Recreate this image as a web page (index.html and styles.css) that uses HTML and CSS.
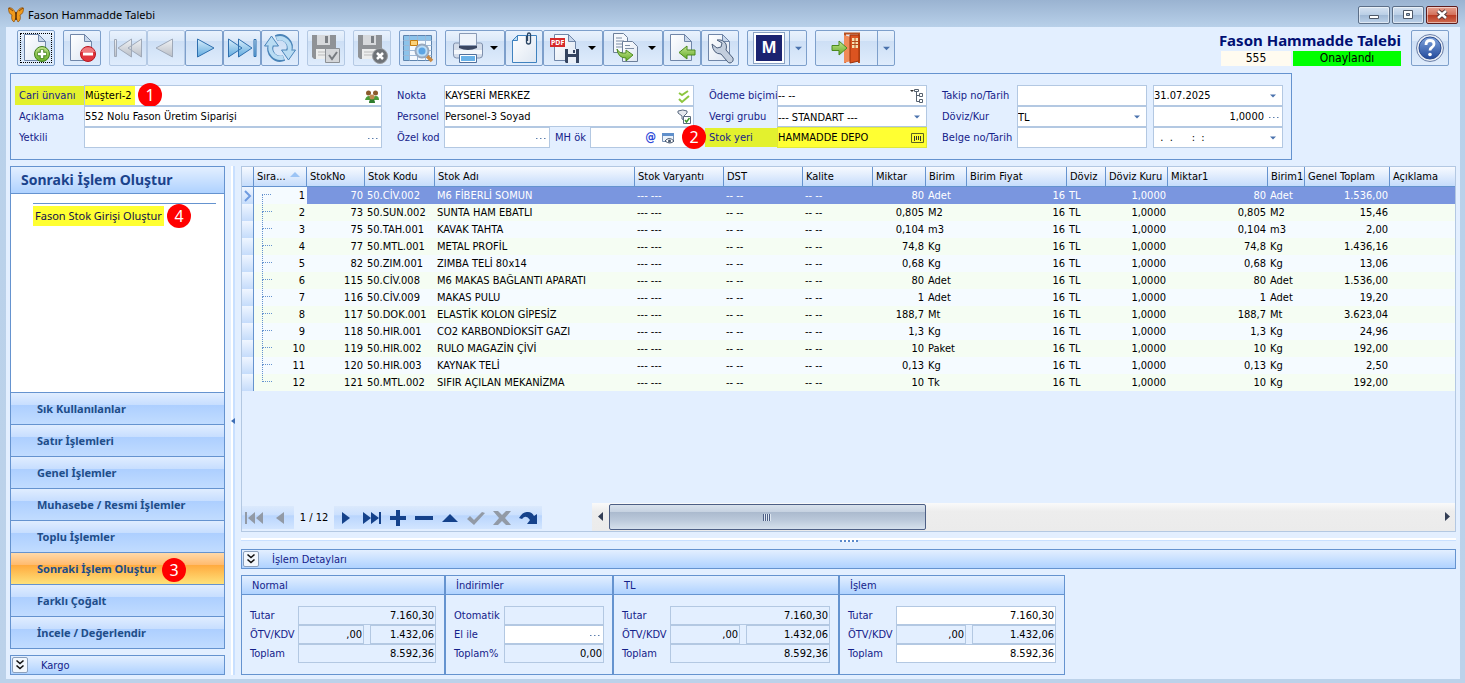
FILE: index.html
```html
<!DOCTYPE html>
<html lang="tr">
<head>
  <meta charset="UTF-8" />
  <meta name="viewport" content="width=device-width, initial-scale=1.0"/>
  <title>Fason Hammadde Talebi</title>
  <link rel="stylesheet" href="styles.css">
</head>
<body>
  <svg class="defs" width="0" height="0">
    <defs>
      <linearGradient id="gPage" x1="0" y1="0" x2="1" y2="1"><stop offset="0" stop-color="#fff"/><stop offset="1" stop-color="#dde6f2"/></linearGradient>
      <linearGradient id="gBlue" x1="0" y1="0" x2="0" y2="1"><stop offset="0" stop-color="#d8eefb"/><stop offset="1" stop-color="#5fa9de"/></linearGradient>
      <linearGradient id="gGrey" x1="0" y1="0" x2="0" y2="1"><stop offset="0" stop-color="#f0f2f5"/><stop offset="1" stop-color="#b9bec6"/></linearGradient>
      <linearGradient id="gHelp" x1="0" y1="0" x2="0" y2="1"><stop offset="0" stop-color="#7fa3dc"/><stop offset="1" stop-color="#234a9c"/></linearGradient>
      <linearGradient id="gGreen" x1="0" y1="0" x2="0" y2="1"><stop offset="0" stop-color="#c4e58e"/><stop offset="1" stop-color="#63ab27"/></linearGradient>
      <symbol id="page" viewBox="0 0 32 32">
        <path d="M4.500 2.500h14l7 7v19h-21z" fill="url(#gPage)" stroke="#7086a8"/>
        <path d="M18.500 2.500v7h7z" fill="#c9d8ec" stroke="#7086a8"/>
      </symbol>
      <symbol id="floppy" viewBox="0 0 32 32">
        <path d="M2 3h24v24H4l-2-2z" fill="#8f9296"/>
        <path d="M7 3h13v10H7z" fill="#d7d9dc"/><path d="M15 4h3v7h-3z" fill="#7b7f84"/>
        <path d="M6 17h15v10H6z" fill="#eceded"/><path d="M8 20h11M8 23h11" stroke="#bbb"/>
      </symbol>
      <symbol id="arrowDown" viewBox="0 0 8 8"><path d="M0 2h8L4 6z"/></symbol>
      <symbol id="dots" viewBox="0 0 10 10"><path d="M0 5.500h1.500M4 5.500h1.500M8 5.500h1.500" stroke="#5d7fae"/></symbol>
      <symbol id="chev" viewBox="0 0 12 12"><path d="M2.500 1.500L6 4.500l3.500-3M2.500 6.500L6 9.500l3.500-3" fill="none" stroke="#111" stroke-width="1.600"/></symbol>
    </defs>
  </svg>

  <div class="window">
    <div class="titlebar">
      <svg class="logo" viewBox="0 0 16 16" width="16" height="16">
        <path d="M8 7C6 2 3 0 .5 1c0 4 1 6 3.500 7-1 3 0 6 2 7l2-4 2 4c2-1 3-4 2-7 2.500-1 3.500-3 3.500-7C13 0 10 2 8 7z" fill="#f09a1c" stroke="#8a4a08" stroke-width=".7"/>
        <path d="M8 5v8" stroke="#4a2504" stroke-width="1.400"/><path d="M1 1l4 3M15 1l-4 3" stroke="#6b3505" stroke-width=".8"/>
      </svg>
      <span class="caption">Fason Hammadde Talebi</span>
      <button class="win" aria-label="Simge durumuna küçült"><svg width="14" height="12" viewBox="0 0 14 12"><path d="M2.500 6.500h9v3h-9z" fill="#fff" stroke="#4d5868"/></svg></button>
      <button class="win" aria-label="Ekranı kapla"><svg width="14" height="12" viewBox="0 0 14 12"><path d="M2.500 1.500h9v8h-9z" fill="#fff" stroke="#4d5868"/><path d="M5.500 4.500h3v2h-3z" fill="#9db5d2" stroke="#4d5868"/></svg></button>
      <button class="win close" aria-label="Kapat"><svg width="14" height="12" viewBox="0 0 14 12"><path d="M3 2l8 7M11 2L3 9" stroke="#54383a" stroke-width="4.500"/><path d="M3 2l8 7M11 2L3 9" stroke="#fff" stroke-width="2.500"/></svg></button>
    </div>

    <div class="content">
      <div class="toolbar">
        <div class="group">
          <button class="tool focused" aria-label="Yeni"><svg viewBox="0 0 32 32"><use href="#page"/><circle cx="22" cy="22" r="7.500" fill="url(#gGreen)" stroke="#3f7d1b"/><path d="M22 17.500v9M17.500 22h9" stroke="#3f7d1b" stroke-width="4.500"/><path d="M22 18v8M18 22h8" stroke="#fff" stroke-width="2.500"/></svg></button>
        </div>
        <div class="group">
          <button class="tool" aria-label="Sil"><svg viewBox="0 0 32 32"><use href="#page"/><circle cx="22" cy="22" r="7.500" fill="#e2343c" stroke="#b5161f"/><path d="M15 20a7.500 7.500 0 0 1 14 0z" fill="#f07a7e"/><path d="M17 22h10" stroke="#fff" stroke-width="3"/></svg></button>
        </div>
        <div class="group">
          <button class="tool off" aria-label="İlk"><svg viewBox="0 0 32 32"><path d="M2.500 7.500h2v17h-2zM19.500 7v18L6 16zM29.500 7v18L16 16z" fill="url(#gGrey)" stroke="#9fa9b8"/></svg></button>
          <button class="tool off" aria-label="Önceki"><svg viewBox="0 0 32 32"><path d="M22.500 7v18L6 16z" fill="url(#gGrey)" stroke="#9fa9b8"/></svg></button>
          <button class="tool" aria-label="Sonraki"><svg viewBox="0 0 32 32"><path d="M9.500 7v18L26 16z" fill="url(#gBlue)" stroke="#2f6fae"/></svg></button>
          <button class="tool" aria-label="Son"><svg viewBox="0 0 32 32"><path d="M2.500 7v18L16 16zM12.500 7v18L26 16zM28 7.500h2v17h-2z" fill="url(#gBlue)" stroke="#2f6fae"/></svg></button>
          <button class="tool" aria-label="Yenile"><svg viewBox="0 0 32 32">
            <path d="M20 26A10 10 0 0 1 7 13M12 6A10 10 0 0 1 25 19" fill="none" stroke="#4a84b8" stroke-width="6"/>
            <path d="M.5 14h14L7.500 4zM31.500 18h-14l7 10z" fill="#b9dcf3" stroke="#4a84b8"/>
            <path d="M19.500 25.500A10 10 0 0 1 7 12.500M12.500 6.500A10 10 0 0 1 25 19.500" fill="none" stroke="#b9dcf3" stroke-width="4"/>
          </svg></button>
        </div>
        <div class="group">
          <button class="tool off" aria-label="Kaydet"><svg viewBox="0 0 32 32"><use href="#floppy"/><path d="M15.500 16.500h14v14h-14z" fill="#d4d6d9" stroke="#8c9095"/><path d="M19 23l3 4 5-7" fill="none" stroke="#777b80" stroke-width="2"/></svg></button>
        </div>
        <div class="group">
          <button class="tool off" aria-label="Vazgeç"><svg viewBox="0 0 32 32"><use href="#floppy"/><circle cx="24" cy="24" r="7.500" fill="#6f7378" stroke="#9a9da1"/><path d="M21 21l6 6M27 21l-6 6" stroke="#fff" stroke-width="2.500"/></svg></button>
        </div>
        <div class="group">
          <button class="tool" aria-label="Ara"><svg viewBox="0 0 32 32"><path d="M1.500 3.500h28v25h-28z" fill="#f4f9fe" stroke="#5e84ae"/><path d="M2 4h5v24H2zM2 4h27v4H2z" fill="#8cc3ea"/><path d="M7.500 3.500v25M15.500 3.500v25M23.500 3.500v25M1.500 8.500h28M1.500 13.500h28M1.500 18.500h28M1.500 23.500h28" stroke="#9db8d6"/><path d="M8.500 8.500h7v5h-7z" fill="#fbd27a" stroke="#c77d10"/><path d="M25 24l5 5" stroke="#c98a44" stroke-width="3.500"/><circle cx="20" cy="19" r="6.500" fill="#b9dcf7" stroke="#9aa9bd" stroke-width="2"/><circle cx="20" cy="19" r="3.500" fill="#5da5e4"/></svg></button>
        </div>
        <div class="group">
          <button class="tool wide" aria-label="Yazdır"><svg viewBox="0 0 32 32"><path d="M1.500 13q0-2 2-2h25q2 0 2 2v10q0 3-3 3h-23q-3 0-3-3z" fill="#d3dcea" stroke="#7f90ad"/><path d="M7 12h18v4q-9 4-18 0z" fill="#3a4661"/><path d="M7.500 1.500h17v12h-17z" fill="#eef3fa" stroke="#8a9ab5"/><path d="M2 18h28v4H2z" fill="#f4f7fb"/><path d="M8.500 23.500h15v6h-15z" fill="#6ab2e8" stroke="#fff"/><path d="M7.500 22.500h17v8h-17z" fill="none" stroke="#51709c"/></svg><svg class="arr"><use href="#arrowDown"/></svg></button>
          <button class="tool" aria-label="Ekler"><svg viewBox="0 0 32 32"><path d="M9.500 3.500h19v27h-24v-22z" fill="url(#gPage)" stroke="#3f82bf"/><path d="M9.500 3.500v5h-5z" fill="#bcdcf4" stroke="#3f82bf"/><path d="M18.500 4v6a2 2 0 0 0 4 0V2.500a1.500 1.500 0 0 0-3 0V9" fill="none" stroke="#2b4563" stroke-width="1.300"/></svg></button>
          <button class="tool wide" aria-label="PDF kaydet"><svg viewBox="0 0 32 32"><use href="#page"/><path d="M0 6h15v9H0z" fill="#d62a2a"/><text x="1" y="13" class="pdf">PDF</text><path d="M15 17h14v14H16l-1-1z" fill="#34435f"/><path d="M18 17h8v5h-8zM18 25h8v6h-8z" fill="#e9eff8"/><path d="M23 18h2v3h-2z" fill="#34435f"/></svg><svg class="arr"><use href="#arrowDown"/></svg></button>
          <button class="tool wide" aria-label="Kopyala"><svg viewBox="0 0 32 32"><path d="M3.500 1.500h10l4 4v15h-14z" fill="#f5f8fc" stroke="#6d7f9a"/><path d="M6 6h6M6 9h8M6 12h8M6 15h8" stroke="#7d8da5"/><path d="M12.500 9.500h10l5 5v15h-15z" fill="url(#gPage)" stroke="#6d7f9a"/><path d="M15 13.500h5M15 16.500h9" stroke="#7d8da5"/><path d="M7 17q2 5 9 4v-3l7 5-7 6v-3q-8 0-9-9z" fill="url(#gGreen)" stroke="#4b8a1e"/></svg><svg class="arr"><use href="#arrowDown"/></svg></button>
          <button class="tool" aria-label="Aktar"><svg viewBox="0 0 32 32"><use href="#page"/><path d="M13 20.500l8-6.500v4h8v5h-8v4z" fill="url(#gGreen)" stroke="#4b8a1e"/></svg></button>
          <button class="tool" aria-label="Araçlar"><svg viewBox="0 0 32 32"><use href="#page"/><path d="M8 12l5 4 4-1 1-4-5-3q6-1 9 4 1 3 0 6l7 8q1 4-3 5-2 0-3-2l-6-7q-8 0-9-10z" fill="#c3cedd" stroke="#4c5f7c"/></svg></button>
        </div>
        <div class="group">
          <button class="tool wide split" aria-label="Modül"><span class="mlogo">M</span><svg class="arr"><use href="#arrowDown"/></svg></button>
        </div>
        <div class="group">
          <button class="tool exit split" aria-label="Çıkış"><svg viewBox="0 0 32 32"><path d="M14 31V1.500h14V31" fill="none" stroke="#b9501f" stroke-width="2"/><path d="M13 3l7 2v24l-7 2z" fill="#f08a58"/><path d="M19 3h9v26l-9 2z" fill="#dc5420" stroke="#9c3009"/><path d="M21 6h6v10h-6z" fill="#f7dfae"/><path d="M24 6v10M21 9.500h6M21 12.500h6" stroke="#b54a1c"/><path d="M1 13.500h7V9l8 7-8 7v-4.500H1z" fill="url(#gGreen)" stroke="#4b8a1e"/></svg><svg class="arr"><use href="#arrowDown"/></svg></button>
        </div>
        <div class="docinfo">
          <div class="doctitle">Fason Hammadde Talebi</div>
          <div class="docstate"><span class="docno">555</span><span class="approved">Onaylandı</span></div>
        </div>
        <button class="tool" aria-label="Yardım"><svg viewBox="0 0 32 32"><circle cx="16" cy="16" r="13.500" fill="#e8edf5" stroke="#6a7fa8"/><circle cx="16" cy="16" r="11" fill="url(#gHelp)" stroke="#2b4c90"/><path d="M12 13q0-4.500 4-4.500t4 3.500q0 2-2 3.300-2 1.200-2 3.200" fill="none" stroke="#fff" stroke-width="2.800"/><circle cx="16" cy="22.500" r="1.800" fill="#fff"/></svg></button>
      </div>

      <div class="form">
        <div class="cols c1">
          <label for="cari" class="mark">Cari ünvanı</label>
          <div class="box"><input id="cari" class="marktext" value="Müşteri-2"><svg class="ic" viewBox="0 0 16 16"><path d="M1 12q1-4 4-4t3 3q1-3 4-3t3 4z" fill="#4b9b38"/><path d="M5 15q0-4 3-4t3 4z" fill="#2e7d2e"/><circle cx="4.500" cy="5" r="2.500" fill="#8b5a2b"/><circle cx="11.500" cy="5" r="2.500" fill="#8b5a2b"/><circle cx="8" cy="9" r="2.500" fill="#c08a50"/></svg><span class="badge b1">1</span></div>
          <label for="aciklama">Açıklama</label>
          <div class="box"><input id="aciklama" value="552 Nolu Fason Üretim Siparişi"></div>
          <label for="yetkili">Yetkili</label>
          <div class="box"><input id="yetkili"><svg class="sm"><use href="#dots"/></svg></div>
        </div>
        <div class="cols c2">
          <label for="nokta">Nokta</label>
          <div class="box"><input id="nokta" value="KAYSERİ MERKEZ"><svg class="ic" viewBox="0 0 16 16"><path d="M3 5l3 2 6-4M3 11l3 3 7-6" fill="none" stroke="#8cc63f" stroke-width="2"/></svg></div>
          <label for="personel">Personel</label>
          <div class="box"><input id="personel" value="Personel-3 Soyad"><svg class="ic" viewBox="0 0 16 16"><path d="M2 2q5-2 9 0v2L8 7v4L6 10V7L2 4z" fill="#e6e9ee" stroke="#5b6a80"/><path d="M7.500 7.500h7v7h-7z" fill="#fff" stroke="#5b6a80"/><path d="M9 11l1.500 2 3-4" fill="none" stroke="#3f9a2b" stroke-width="1.500"/></svg></div>
          <label for="ozel">Özel kod</label>
          <div class="pair">
            <div class="box ozel"><input id="ozel"><svg class="sm"><use href="#dots"/></svg></div>
            <label for="mh">MH ök</label>
            <div class="box grow"><input id="mh"><span class="at">@</span><svg class="ic mhic" viewBox="0 0 16 16"><path d="M2.500 3.500h11v8h-11z" fill="#eaf2fb" stroke="#7a93b5"/><path d="M2 3h12v3H2z" fill="#5f8fcb"/><path d="M5 11q4-5 9 0-4 4-9 0z" fill="#fff" stroke="#44546b"/><circle cx="9.500" cy="11" r="1.500" fill="#44546b"/></svg><span class="badge b2">2</span></div>
          </div>
        </div>
        <div class="cols c3">
          <label for="odeme">Ödeme biçimi</label>
          <div class="box"><input id="odeme" value="-- --"><svg class="ic" viewBox="0 0 16 16"><path d="M1 2h4L3 4z" fill="#333"/><path d="M7.500 3v10.500h3M7.500 7.500h3" fill="none" stroke="#55606e"/><path d="M5.500 1.500h4v2h-4zM10.500 5.500h3v3h-3zM10.500 11.500h3v3h-3z" fill="#fff" stroke="#55606e"/></svg></div>
          <label for="vergi">Vergi grubu</label>
          <div class="box"><select id="vergi"><option>--- STANDART ---</option></select><svg class="sel"><use href="#arrowDown"/></svg></div>
          <label for="stok" class="mark">Stok yeri</label>
          <div class="box yellow"><input id="stok" value="HAMMADDE DEPO"><svg class="ic" viewBox="0 0 16 16"><path d="M2.500 3.500h12v9h-12z" fill="none" stroke="#5d6420"/><path d="M5.500 6v5M7.500 6v4M9.500 6v4M11.500 6v5" stroke="#333"/></svg></div>
        </div>
        <div class="cols c4">
          <label for="takip">Takip no/Tarih</label>
          <div class="box"><input id="takip"></div>
          <div class="box date"><input aria-label="Takip tarihi" value="31.07.2025"><svg class="sel"><use href="#arrowDown"/></svg></div>
          <label for="doviz">Döviz/Kur</label>
          <div class="box"><select id="doviz"><option>TL</option></select><svg class="sel"><use href="#arrowDown"/></svg></div>
          <div class="box date"><input class="num" aria-label="Kur" value="1,0000"><svg class="sm"><use href="#dots"/></svg></div>
          <label for="belge">Belge no/Tarih</label>
          <div class="box"><input id="belge"></div>
          <div class="box date"><input aria-label="Belge tarihi" value="  .  .      :  :"><svg class="sel"><use href="#arrowDown"/></svg></div>
        </div>
      </div>

      <div class="main">
        <div class="side">
          <div class="nav">
            <div class="navhead">Sonraki İşlem Oluştur</div>
            <div class="navbody">
              <a href="#" class="task">Fason Stok Girişi Oluştur<span class="badge b4">4</span></a>
            </div>
            <button class="navbtn">Sık Kullanılanlar</button>
            <button class="navbtn">Satır İşlemleri</button>
            <button class="navbtn">Genel İşlemler</button>
            <button class="navbtn">Muhasebe / Resmi İşlemler</button>
            <button class="navbtn">Toplu İşlemler</button>
            <button class="navbtn active">Sonraki İşlem Oluştur<span class="badge b3">3</span></button>
            <button class="navbtn">Farklı Çoğalt</button>
            <button class="navbtn">İncele / Değerlendir</button>
          </div>
          <div class="bar"><button class="expand" aria-label="Kargo aç"><svg width="12" height="12"><use href="#chev"/></svg></button>Kargo</div>
        </div>
        <div class="vsplit"><svg width="4" height="8" viewBox="0 0 4 8"><path d="M4 1v6L0 4z" fill="#3f6fb5"/></svg></div>
        <div class="right">
          <div class="gridpanel">
            <table>
              <colgroup>
                <col style="width:12px"><col style="width:53px"><col style="width:58px"><col style="width:70px"><col style="width:200px"><col style="width:89px"><col style="width:79px"><col style="width:70px"><col style="width:53px"><col style="width:41px"><col style="width:100px"><col style="width:39px"><col style="width:62px"><col style="width:100px"><col style="width:37px"><col style="width:85px"><col>
              </colgroup>
              <thead>
                <tr><th></th><th>Sıra...<svg class="sort" width="10" height="6" viewBox="0 0 10 6"><path d="M5 0l5 5H0z" fill="#9cc4f5"/></svg></th><th>StokNo</th><th>Stok Kodu</th><th>Stok Adı</th><th>Stok Varyantı</th><th>DST</th><th>Kalite</th><th>Miktar</th><th>Birim</th><th>Birim Fiyat</th><th>Döviz</th><th>Döviz Kuru</th><th>Miktar1</th><th>Birim1</th><th>Genel Toplam</th><th>Açıklama</th></tr>
              </thead>
              <tbody id="rows"></tbody>
            </table>
            <div class="gridfoot">
              <div class="pager">
                <button aria-label="İlk kayıt"><svg viewBox="0 0 20 16" fill="#929aa6"><path d="M1 2h2v12H1zM11 2v12L4 8zM19 2v12l-7-6z"/></svg></button>
                <button aria-label="Önceki kayıt"><svg viewBox="0 0 20 16" fill="#929aa6"><path d="M14 2v12L6 8z"/></svg></button>
                <span class="pos">1 / 12</span>
                <button aria-label="Sonraki kayıt"><svg viewBox="0 0 20 16"><path d="M6 2v12l8-6z"/></svg></button>
                <button aria-label="Son kayıt"><svg viewBox="0 0 20 16"><path d="M1 2v12l8-6zM9 2v12l8-6zM17 2h2v12h-2z"/></svg></button>
                <button aria-label="Ekle"><svg viewBox="0 0 20 16"><path d="M8 0h4v6h6v4h-6v6H8v-6H2V6h6z"/></svg></button>
                <button aria-label="Çıkar"><svg viewBox="0 0 20 16"><path d="M1 6h18v4H1z"/></svg></button>
                <button aria-label="Düzenle"><svg viewBox="0 0 20 16"><path d="M10 4l8 8H2z"/></svg></button>
                <button aria-label="Onayla"><svg viewBox="0 0 20 16"><path d="M1 9l3-3 4 4 8-8 3 1L8 15z" fill="#929aa6"/></svg></button>
                <button aria-label="İptal"><svg viewBox="0 0 20 16"><path d="M1 1h5l4 4 4-4h5l-6 7 6 7h-5l-4-4-4 4H1l6-7z" fill="#929aa6"/></svg></button>
                <button aria-label="Geri al"><svg viewBox="0 0 20 16"><path d="M1 8Q5 1 10 2q4 0 6 4l3-2v10H9l3-4Q8 4 4 9z"/></svg></button>
              </div>
              <div class="scroll">
                <button aria-label="Sola"><svg width="8" height="10" viewBox="0 0 8 10"><path d="M6 1v9L1 5.500z"/></svg></button>
                <div class="track"><div class="thumb"><i></i></div></div>
                <button aria-label="Sağa"><svg width="8" height="10" viewBox="0 0 8 10"><path d="M2 1v9l5-4.500z"/></svg></button>
              </div>
            </div>
          </div>
          <div class="hsplit"><i></i></div>
          <div class="bar wide"><button class="expand" aria-label="İşlem detayları aç"><svg width="12" height="12"><use href="#chev"/></svg></button>İşlem Detayları</div>
          <div class="totals">
            <fieldset class="tot t1">
              <div class="tothead">Normal</div>
              <div class="totrows">
                <label for="n1">Tutar</label><input id="n1" class="ro full" value="7.160,30" readonly>
                <label for="n2">ÖTV/KDV</label><input id="n2" class="ro" value=",00" readonly><input aria-label="KDV" class="ro" value="1.432,06" readonly>
                <label for="n3">Toplam</label><input id="n3" class="ro full" value="8.592,36" readonly>
              </div>
            </fieldset>
            <fieldset class="tot t2">
              <div class="tothead">İndirimler</div>
              <div class="totrows">
                <label for="i1">Otomatik</label><input id="i1" class="ro" readonly>
                <label for="i2">El ile</label><div class="box"><input id="i2"><svg class="sm"><use href="#dots"/></svg></div>
                <label for="i3">Toplam%</label><input id="i3" class="ro" value="0,00" readonly>
              </div>
            </fieldset>
            <fieldset class="tot t3">
              <div class="tothead">TL</div>
              <div class="totrows">
                <label for="l1">Tutar</label><input id="l1" class="ro full" value="7.160,30" readonly>
                <label for="l2">ÖTV/KDV</label><input id="l2" class="ro" value=",00" readonly><input aria-label="KDV TL" class="ro" value="1.432,06" readonly>
                <label for="l3">Toplam</label><input id="l3" class="ro full" value="8.592,36" readonly>
              </div>
            </fieldset>
            <fieldset class="tot t3">
              <div class="tothead">İşlem</div>
              <div class="totrows">
                <label for="s1">Tutar</label><input id="s1" class="full" value="7.160,30">
                <label for="s2">ÖTV/KDV</label><input id="s2" class="ro" value=",00" readonly><input aria-label="KDV işlem" class="ro" value="1.432,06" readonly>
                <label for="s3">Toplam</label><input id="s3" class="full" value="8.592,36">
              </div>
            </fieldset>
          </div>
        </div>
      </div>
    </div>
  </div>

  <script>
    // no, kod, ad, miktar, birim, miktar1, birim1, toplam
    const items = [
      ["70", "50.CİV.002", "M6 FİBERLİ SOMUN", "80", "Adet", "80", "Adet", "1.536,00"],
      ["73", "50.SUN.002", "SUNTA HAM EBATLI", "0,805", "M2", "0,805", "M2", "15,46"],
      ["75", "50.TAH.001", "KAVAK TAHTA", "0,104", "m3", "0,104", "m3", "2,00"],
      ["77", "50.MTL.001", "METAL PROFİL", "74,8", "Kg", "74,8", "Kg", "1.436,16"],
      ["82", "50.ZIM.001", "ZIMBA TELİ 80x14", "0,68", "Kg", "0,68", "Kg", "13,06"],
      ["115", "50.CİV.008", "M6 MAKAS BAĞLANTI APARATI", "80", "Adet", "80", "Adet", "1.536,00"],
      ["116", "50.CİV.009", "MAKAS PULU", "1", "Adet", "1", "Adet", "19,20"],
      ["117", "50.DOK.001", "ELASTİK KOLON GİPESİZ", "188,7", "Mt", "188,7", "Mt", "3.623,04"],
      ["118", "50.HIR.001", "CO2 KARBONDİOKSİT GAZI", "1,3", "Kg", "1,3", "Kg", "24,96"],
      ["119", "50.HIR.002", "RULO MAGAZİN ÇİVİ", "10", "Paket", "10", "Kg", "192,00"],
      ["120", "50.HIR.003", "KAYNAK TELİ", "0,13", "Kg", "0,13", "Kg", "2,50"],
      ["121", "50.MTL.002", "SIFIR AÇILAN MEKANİZMA", "10", "Tk", "10", "Kg", "192,00"]
    ];
    const marker = '<svg width="8" height="12" viewBox="0 0 8 12"><path d="M1 1l5 5-5 5" fill="none" stroke="#6f9be0" stroke-width="2"/></svg>';

    document.getElementById("rows").innerHTML = items.map((r, i) => `
      <tr class="${i === 0 ? "selected" : ""}">
        <td class="ind">${i === 0 ? marker : ""}</td>
        <td class="sira r">${i + 1}</td>
        <td class="r">${r[0]}</td><td>${r[1]}</td><td>${r[2]}</td>
        <td>--- ---</td><td>-- --</td><td>-- --</td>
        <td class="r">${r[3]}</td><td>${r[4]}</td>
        <td class="r">16</td><td>TL</td><td class="r">1,0000</td>
        <td class="r">${r[5]}</td><td>${r[6]}</td><td class="r">${r[7]}</td><td></td>
      </tr>`).join("");
  </script>
</body>
</html>
```

FILE: styles.css
```css
* {
  box-sizing: border-box;
}
body {
  margin: 0;
  font-family: "DejaVu Sans Condensed", "Noto Sans", sans-serif;
  font-size: 11px;
  color: #000;
  background: #bcd2ea;
}
button, input, select {
  font: inherit;
  color: inherit;
  margin: 0;
  padding: 0;
  border: 0;
  background: none;
  border-radius: 0;
  outline: none;
}
button {
  cursor: pointer;
}
label {
  color: #15228a;
  white-space: nowrap;
}
.defs {
  position: absolute;
}
.window {
  min-height: 100vh;
  display: flex;
  flex-direction: column;
  padding: 0 5px 4px 6px;
  background: linear-gradient(#9ab3d1, #b9d1ea 28px, #bcd2ea);
}

/* title bar */
.titlebar {
  height: 27px;
  display: flex;
  align-items: center;
  padding: 2px 2px 0;
}
.caption {
  flex: 1;
  margin-left: 4px;
  font-family: "Noto Sans", sans-serif;
  font-size: 11px;
}
.win {
  width: 32px;
  height: 18px;
  margin-left: 2px;
  border: 1px solid #5c6f88;
  border-radius: 2px;
  background: linear-gradient(#d6e3f2, #b9cee6 50%, #9fb8d5 50%, #bcd1e9);
  box-shadow: inset 0 0 0 1px rgba(255, 255, 255, .5);
  display: flex;
  align-items: center;
  justify-content: center;
}
.win.close {
  border-color: #5e1c1c;
  background: linear-gradient(#e5a190, #d3705a 50%, #b93a22 50%, #cf6a50);
}

.content {
  flex: 1;
  display: flex;
  flex-direction: column;
  background: #e3efff;
  padding: 3px 4px 4px;
}

/* toolbar */
.toolbar {
  display: flex;
  gap: 8px;
  padding: 0 7px;
}
.group {
  display: flex;
}
.tool {
  width: 38px;
  height: 36px;
  border: 1px solid #7d9fcb;
  border-radius: 2px;
  background: linear-gradient(#e9f2fd, #dce9f9 28%, #cddff5 30%, #dfecfc);
  display: flex;
  align-items: center;
  justify-content: center;
  flex-shrink: 0;
}
.tool > svg {
  width: 32px;
  height: 32px;
}
.tool.wide {
  width: 60px;
  justify-content: space-between;
  padding: 0 6px;
}
.tool.exit {
  width: 80px;
  justify-content: space-between;
  padding: 0 4px 0 15px;
}
.tool.off {
  border-color: #b4c9e4;
}
.tool.focused {
  outline: 1px dotted #000;
  outline-offset: -4px;
}
.tool .arr {
  width: 8px;
  height: 8px;
}
.split {
  background: linear-gradient(#7d9fcb, #7d9fcb) right 16px top / 1px 100% no-repeat, linear-gradient(#e9f2fd, #dce9f9 28%, #cddff5 30%, #dfecfc);
}
.tool.wide.split {
  padding-right: 4px;
}
.tool.split .arr {
  width: 7px;
  height: 7px;
  fill: #4a72ad;
}
.mlogo {
  width: 30px;
  height: 30px;
  border: 2px solid #fff;
  outline: 1px solid #8aa2c4;
  background: #1b2370;
  color: #fff;
  font: bold 16px/25px "Noto Sans", sans-serif;
}
.pdf {
  font: bold 7px "Noto Sans", sans-serif;
  fill: #fff;
}
.docinfo {
  margin-left: auto;
  text-align: center;
  margin-right: 2px;
}
.doctitle {
  height: 21px;
  font: bold 15px/21px "Noto Sans", sans-serif;
  color: #000f73;
  text-align: right;
}
.docstate {
  display: flex;
  gap: 2px;
  font-size: 12px;
  line-height: 15px;
  justify-content: flex-end;
}
.docno {
  width: 70px;
  background: #fffbf0;
}
.approved {
  width: 108px;
  background: #00ff00;
}

/* document header */
.form {
  width: fit-content;
  margin-top: 7px;
  padding: 11px 8px;
  border: 1px solid #6593cf;
  display: flex;
  gap: 15px;
}
.cols {
  display: grid;
  grid-auto-rows: 21px;
  line-height: 21px;
}
.c1 {
  grid-template-columns: 65px 298px;
}
.c2 {
  grid-template-columns: 47px 250px;
}
.c3 {
  grid-template-columns: 68px 150px;
}
.c4 {
  grid-template-columns: 75px 130px 136px;
}
.date {
  margin-left: 6px;
}
.box {
  position: relative;
  display: flex;
  align-items: center;
  background: #fff;
  border: 1px solid #b3c8e2;
  min-width: 0;
}
.box input, .box select {
  flex: 1;
  min-width: 0;
  height: 100%;
}
.box select {
  appearance: none;
}
.box .ic {
  width: 16px;
  height: 16px;
  margin-right: 1px;
}
.box .sm {
  width: 10px;
  height: 10px;
  margin-right: 3px;
}
.box .sel {
  width: 6px;
  height: 6px;
  margin-right: 6px;
  fill: #4a72ad;
}
.num, .tot input {
  text-align: right;
}
.box .num {
  padding-right: 5px;
}
.pair {
  display: flex;
}
.pair label {
  width: 40px;
  padding-left: 5px;
}
.ozel {
  width: 106px;
}
.grow {
  flex: 1;
}
.at {
  color: #2b48d8;
  font-size: 12px;
  font-weight: bold;
  margin-right: 4px;
}
.box .mhic {
  margin-right: 17px;
}
.mark {
  background: #e3f12e;
  margin: 1px 0 1px -4px;
  padding-left: 4px;
  line-height: 19px;
}
.marktext {
  background: linear-gradient(#ffff32, #ffff32) left / 50px 100% no-repeat;
}
.yellow {
  background: #ffff32;
  border-color: #dfe83a;
}

/* numbered callouts */
.badge {
  position: absolute;
  width: 24px;
  height: 24px;
  border-radius: 50%;
  background: #ff0000;
  color: #fff;
  font: 16px/24px "Noto Sans", sans-serif;
  text-align: center;
}
.b1 {
  left: 53px;
  top: -3px;
}
.b2 {
  right: -13px;
  top: -3px;
}
.b3 {
  left: 151px;
  top: 5px;
}
.b4 {
  left: 134px;
  top: -2px;
}

/* left navigation */
.main {
  flex: 1;
  display: flex;
  margin-top: 6px;
}
.side {
  width: 215px;
  display: flex;
  flex-direction: column;
  gap: 6px;
}
.nav {
  flex: 1;
  display: flex;
  flex-direction: column;
  border: 1px solid #6593cf;
  background: #fff;
}
.navhead {
  height: 27px;
  padding-left: 10px;
  font: bold 14px/26px "Noto Sans", sans-serif;
  color: #1b438c;
  border-bottom: 1px solid #6593cf;
  background: linear-gradient(#e3efff, #afd2ff);
}
.navbody {
  flex: 1;
  margin: 9px 8px 0 22px;
  padding-top: 2px;
  border-top: 1px solid #6593cf;
}
.task {
  position: relative;
  display: inline-block;
  height: 20px;
  padding: 0 2px;
  background: #ffff32;
  color: #10104a;
  text-decoration: none;
  font: 11px/20px "Noto Sans", sans-serif;
  white-space: nowrap;
}
.navbtn {
  position: relative;
  height: 32px;
  padding-left: 26px;
  text-align: left;
  font: bold 11px/31px "Noto Sans", sans-serif;
  color: #204d89;
  border-top: 1px solid #6593cf;
  background: linear-gradient(#e0edff, #c7deff 38%, #adcfff 40%, #c1dcff);
}
.navbtn.active {
  background: linear-gradient(#ffd9aa, #ffbb6e 38%, #ffab3f 40%, #fee17a);
}
.bar {
  height: 20px;
  display: flex;
  align-items: center;
  gap: 13px;
  padding: 0 1px;
  color: #15228a;
  border: 1px solid #6593cf;
  background: linear-gradient(#e3efff, #afd2ff);
}
.expand {
  width: 16px;
  height: 16px;
  border: 1px solid #8ba0bc;
  border-radius: 2px;
  background: #f2f7fd;
  display: flex;
  align-items: center;
  justify-content: center;
}
.vsplit {
  width: 4px;
  margin: 0 6px;
  border-left: 2px solid #fff;
  background: #c9e0ff;
  display: flex;
  align-items: center;
}
.vsplit svg {
  margin-left: -2px;
  flex-shrink: 0;
}

/* item grid */
.right {
  flex: 1;
  min-width: 0;
  display: flex;
  flex-direction: column;
}
.gridpanel {
  flex: 1;
  display: flex;
  flex-direction: column;
  justify-content: space-between;
  border: 1px solid #b3c8e2;
}
table {
  width: 100%;
  table-layout: fixed;
  border-collapse: separate;
  border-spacing: 0;
}
th {
  height: 20px;
  padding: 0 0 0 3px;
  font-weight: normal;
  text-align: left;
  white-space: nowrap;
  border-right: 1px solid #6593cf;
  border-bottom: 1px solid #6593cf;
  background: linear-gradient(#f7faff, #c5dcfb);
}
th:last-child {
  border-right: 0;
}
.sort {
  margin: 0 0 2px 4px;
}
td {
  height: 17px;
  line-height: 17px;
  padding: 0 2px;
  white-space: nowrap;
}
tbody tr {
  background: #f5fbff;
}
tbody tr:nth-child(even) {
  background: #f5fdf3;
}
.selected td {
  background: #7a96df;
  color: #fff;
}
.selected .sira {
  background: #f5fbff;
  color: #000;
}
tbody .ind {
  padding: 0 0 0 2px;
  border-right: 1px solid #6593cf;
  background: linear-gradient(#f0f6ff, #c5dcfb);
}
.ind svg {
  display: block;
}
.r {
  text-align: right;
}
/* tree lines in front of the row number */
.sira {
  position: relative;
}
.sira::before {
  content: "";
  position: absolute;
  left: 8px;
  top: -10px;
  width: 9px;
  height: 17px;
  border-left: 1px dotted #6593cf;
  border-bottom: 1px dotted #6593cf;
}
.selected .sira::before {
  top: 6px;
  height: 1px;
  border-left: 0;
}
.gridfoot {
  display: flex;
  height: 28px;
}
.pager {
  display: flex;
  margin: 3px 50px 2px 0;
  background: linear-gradient(#dbe9fc, #cbe0fe 40%, #b9d5fd 42%, #d2e5ff);
  fill: #15428b;
}
.pager button {
  width: 26px;
  padding: 0 4px 0 2px;
}
.pager svg {
  display: block;
  width: 20px;
  height: 16px;
}
.pos {
  width: 40px;
  text-align: center;
  line-height: 23px;
  background: #e3efff;
}
.scroll {
  flex: 1;
  display: flex;
  background: linear-gradient(#fafafa, #ededed 30%, #ebebeb);
}
.scroll button {
  width: 17px;
  fill: #333e55;
}
.track {
  flex: 1;
  padding: 1px 0;
}
.thumb {
  width: 38.200%;
  height: 26px;
  border: 1px solid #4d5f85;
  border-radius: 2px;
  background: linear-gradient(#d9e2ed, #c6d2e1 28%, #abbace 30%, #b9c7d9 60%, #d5e0ec);
  display: flex;
  align-items: center;
  justify-content: center;
}
.thumb i {
  width: 8px;
  height: 7px;
  background: repeating-linear-gradient(90deg, #4d5f85 0 1px, #dfe8f2 1px 2px);
}
.hsplit {
  height: 4px;
  margin: 6px 0 7px;
  border-top: 2px solid #fff;
  background: linear-gradient(#c9e0ff, #c9e0ff) 0 0 / 100% 1px no-repeat;
}
.hsplit i {
  display: block;
  width: 18px;
  height: 2px;
  margin: 0 auto;
  background: repeating-linear-gradient(90deg, #5b89cb 0 2px, #fff 2px 4px);
}
.bar.wide {
  flex-shrink: 0;
}

/* totals */
.totals {
  display: flex;
  margin-top: 6px;
}
.tot {
  min-width: 0;
  margin: 0;
  padding: 0;
  height: 100px;
  border: 1px solid #6593cf;
}
.t1 {
  width: 204px;
}
.t2 {
  width: 168px;
}
.t3 {
  width: 226px;
}
.tothead {
  height: 19px;
  padding-left: 10px;
  line-height: 19px;
  color: #15228a;
  border-bottom: 1px solid #6593cf;
  background: linear-gradient(#e3efff, #afd2ff);
}
.totrows {
  display: grid;
  column-gap: 6px;
  grid-auto-rows: 19px;
  line-height: 19px;
  padding: 11px 8px 0;
}
.t1 .totrows {
  grid-template-columns: 42px 66px 66px;
}
.t2 .totrows {
  grid-template-columns: 44px 100px;
}
.t3 .totrows {
  grid-template-columns: 42px 70px 84px;
}
.totrows > input {
  width: 100%;
  min-width: 0;
  background: #fff;
  border: 1px solid #b3c8e2;
  padding-right: 1px;
}
.totrows > .ro {
  background: #e3efff;
}
.totrows > .full {
  grid-column: span 2;
}
```
